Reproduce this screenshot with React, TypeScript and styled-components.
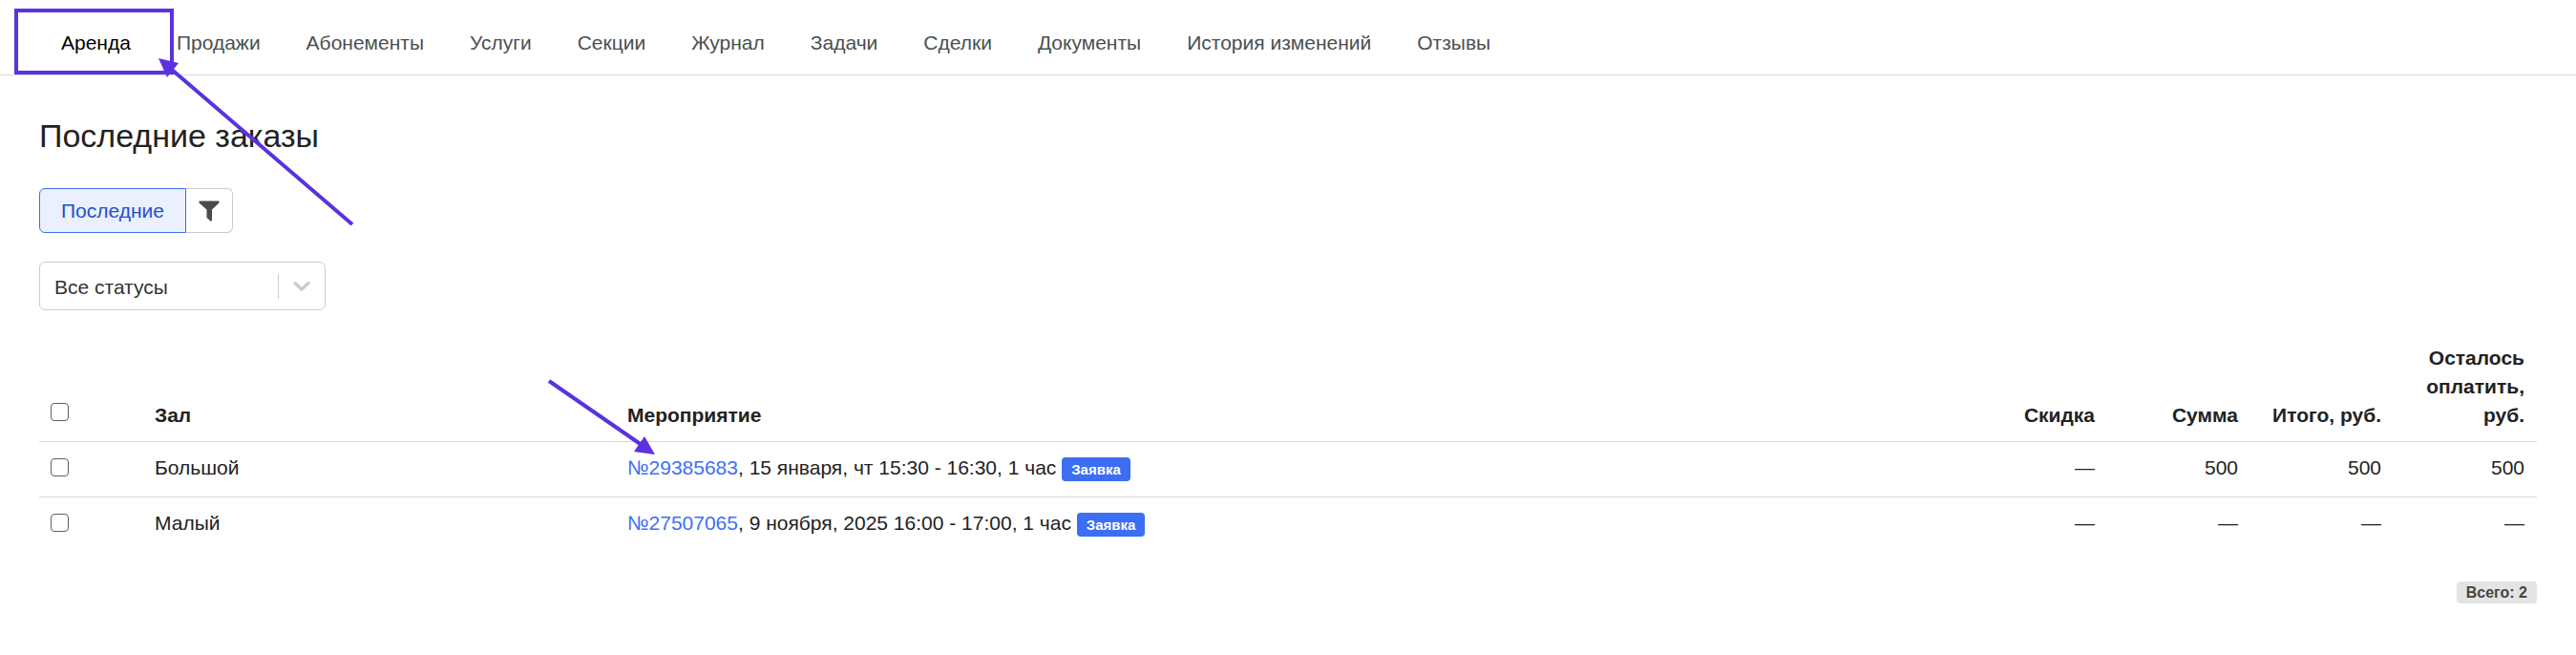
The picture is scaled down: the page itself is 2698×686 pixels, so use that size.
import React from 'react';
import styled, { createGlobalStyle, css } from 'styled-components';

const ACCENT = '#5a32e0';

const GlobalStyle = createGlobalStyle`
  *, *::before, *::after { box-sizing: border-box; }
  body {
    margin: 0;
    background: #fff;
    color: #222;
    font: 21px/30px "Liberation Sans", Arial, sans-serif;
  }
`;

const Page = styled.div`
  position: relative;
`;

const Tabs = styled.nav`
  display: flex;
  height: 79px;
  padding: 12px 40px 0;
  border-bottom: 1px solid #d9d9d9;
`;

const Tab = styled.a<{ $active?: boolean }>`
  display: flex;
  align-items: center;
  padding: 0 24px;
  color: ${({ $active }) => ($active ? '#000' : '#495052')};
  text-decoration: none;
  white-space: nowrap;
`;

const Content = styled.main`
  padding: 40px 41px 48px;
`;

const Title = styled.h1`
  margin: 0 0 32px;
  font-size: 34px;
  line-height: 46px;
  font-weight: 400;
`;

const ButtonGroup = styled.div`
  display: flex;
  margin-bottom: 30px;
`;

const GroupButton = styled.button<{ $active?: boolean }>`
  display: flex;
  align-items: center;
  justify-content: center;
  height: 47px;
  padding: 0 ${({ $active }) => ($active ? 22 : 13)}px;
  border: 1px solid #c8cacb;
  background: #fff;
  color: #464c4e;
  font: inherit;
  cursor: pointer;

  &:first-child { border-radius: 6px 0 0 6px; }
  &:last-child { border-left: 0; border-radius: 0 6px 6px 0; }

  ${({ $active }) =>
    $active &&
    css`
      border-color: #3b6ee8;
      background: #eaf0fe;
      color: #2450c8;
    `}
`;

const SelectBox = styled.div`
  display: grid;
  grid-template-columns: 1fr 49px;
  align-items: center;
  width: 300px;
  height: 51px;
  margin-bottom: 35px;
  border: 1px solid #ccc;
  border-radius: 6px;
`;

const StatusSelect = styled.select`
  grid-area: 1 / 1 / 2 / 3;
  width: 100%;
  height: 100%;
  padding: 2px 60px 0 15px;
  border: 0;
  background: transparent;
  color: #333;
  font: inherit;
  appearance: none;
`;

const SelectArrow = styled.span`
  grid-area: 1 / 2;
  display: flex;
  align-items: center;
  justify-content: center;
  height: 26px;
  border-left: 1px solid #ccc;
  pointer-events: none;
`;

const Table = styled.table`
  width: 100%;
  table-layout: fixed;
  border-collapse: collapse;
`;

const Column = styled.col<{ $width?: number }>`
  width: ${({ $width }) => ($width ? `${$width}px` : 'auto')};
`;

const Row = styled.tr`
  tbody &:not(:last-child) { border-bottom: 1px solid #d9d9d9; }
  thead & { border-bottom: 1px solid #d9d9d9; }
`;

const cell = css<{ $numeric?: boolean }>`
  padding: 0 13px 12px;
  text-align: ${({ $numeric }) => ($numeric ? 'right' : 'left')};
`;

const HeadCell = styled.th<{ $numeric?: boolean }>`
  ${cell}
  vertical-align: bottom;
`;

const Cell = styled.td<{ $numeric?: boolean }>`
  ${cell}
  height: 58px;
  padding-top: 12px;
  vertical-align: top;
`;

const Checkbox = styled.input`
  display: block;
  width: 19px;
  height: 19px;
  margin: 5px 0 9px -1px;
  appearance: none;
  border: 1px solid #5f5f5f;
  border-radius: 4px;
  background: #fff;

  &:checked { background: #3b6ef2; }
`;

const Link = styled.a`
  color: #3f70f4;
  text-decoration: none;
`;

const Badge = styled.span<{ $muted?: boolean }>`
  display: inline-block;
  padding: 0 10px;
  border-radius: 4px;
  background: ${({ $muted }) => ($muted ? '#e4e4e4' : '#3b6ef2')};
  color: ${({ $muted }) => ($muted ? '#444' : '#fff')};
  font-size: ${({ $muted }) => ($muted ? 16 : 15)}px;
  line-height: ${({ $muted }) => ($muted ? 23 : 25)}px;
  font-weight: 700;
`;

const Footer = styled.footer`
  display: flex;
  justify-content: flex-end;
  margin-top: 30px;
`;

const Highlight = styled.div`
  position: absolute;
  top: 9px;
  left: 15px;
  width: 167px;
  height: 69px;
  border: 4px solid ${ACCENT};
  pointer-events: none;
`;

const Arrows = styled.svg`
  position: absolute;
  top: 0;
  left: 0;
  pointer-events: none;
`;

const tabs = [
  'Аренда', 'Продажи', 'Абонементы', 'Услуги', 'Секции', 'Журнал',
  'Задачи', 'Сделки', 'Документы', 'История изменений', 'Отзывы',
];

const orders = [
  { hall: 'Большой', id: '№29385683', when: '15 января, чт 15:30 - 16:30, 1 час', sums: ['—', '500', '500', '500'] },
  { hall: 'Малый', id: '№27507065', when: '9 ноября, 2025 16:00 - 17:00, 1 час', sums: ['—', '—', '—', '—'] },
];

export default function App() {
  return (
    <Page>
      <GlobalStyle />
      <Tabs>
        {tabs.map((name, i) => (
          <Tab key={name} href="#" $active={i === 0}>{name}</Tab>
        ))}
      </Tabs>
      <Content>
        <Title>Последние заказы</Title>
        <ButtonGroup>
          <GroupButton $active>Последние</GroupButton>
          <GroupButton aria-label="Фильтр">
            <svg width="22" height="22" viewBox="0 0 22 22" fill="currentColor">
              <path d="M0.5 0.5H21.5V2.5L14 9.5V21.5H12.5L8.5 18V9.5L0.5 2.5Z" />
            </svg>
          </GroupButton>
        </ButtonGroup>
        <SelectBox>
          <StatusSelect aria-label="Статус">
            <option>Все статусы</option>
          </StatusSelect>
          <SelectArrow>
            <svg width="18" height="12" viewBox="0 0 18 12" fill="none" stroke="#ccc" strokeWidth="3.4" strokeLinecap="round" strokeLinejoin="round">
              <path d="M2 2.5L9 9L16 2.5" />
            </svg>
          </SelectArrow>
        </SelectBox>
        <Table>
          <colgroup>
            <Column $width={108} />
            <Column $width={495} />
            <Column />
            <Column $width={150} />
            <Column $width={150} />
            <Column $width={150} />
            <Column $width={150} />
          </colgroup>
          <thead>
            <Row>
              <HeadCell><Checkbox type="checkbox" aria-label="Выбрать все" /></HeadCell>
              <HeadCell>Зал</HeadCell>
              <HeadCell>Мероприятие</HeadCell>
              <HeadCell $numeric>Скидка</HeadCell>
              <HeadCell $numeric>Сумма</HeadCell>
              <HeadCell $numeric>Итого, руб.</HeadCell>
              <HeadCell $numeric>Осталось оплатить, руб.</HeadCell>
            </Row>
          </thead>
          <tbody>
            {orders.map((order) => (
              <Row key={order.id}>
                <Cell><Checkbox type="checkbox" aria-label={order.hall} /></Cell>
                <Cell>{order.hall}</Cell>
                <Cell>
                  <Link href="#">{order.id}</Link>, {order.when} <Badge>Заявка</Badge>
                </Cell>
                {order.sums.map((sum, i) => (
                  <Cell key={i} $numeric>{sum}</Cell>
                ))}
              </Row>
            ))}
          </tbody>
        </Table>
        <Footer><Badge $muted>Всего: 2</Badge></Footer>
      </Content>
      <Highlight />
      <Arrows width="700" height="490" viewBox="0 0 700 490" fill={ACCENT} stroke="none" aria-hidden="true">
        <path d="M369 235L180 73" stroke={ACCENT} strokeWidth="4" />
        <path d="M166 61L187 66L175 81Z" />
        <path d="M575 399L672 466" stroke={ACCENT} strokeWidth="4" />
        <path d="M686 476L664 473L675 457Z" />
      </Arrows>
    </Page>
  );
}
